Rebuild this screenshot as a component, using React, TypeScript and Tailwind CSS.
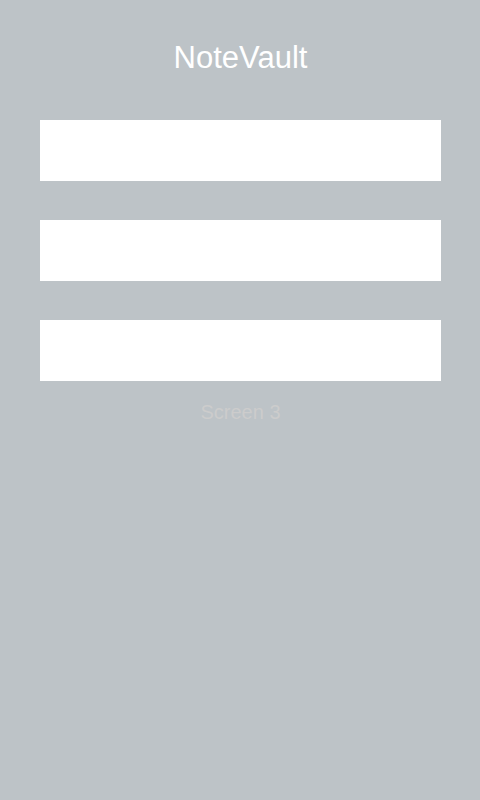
const FIELDS = ['First note', 'Second note', 'Third note'];

export default function App() {
  return (
    <main className="min-h-screen bg-[#bdc3c7] py-10 pr-[39px] pl-10 text-center font-['Liberation_Sans',Arial,sans-serif]">
      <h1 className="text-[31px] leading-9 text-white">NoteVault</h1>

      {/* Empty note fields */}
      <form className="mt-11 flex flex-col gap-[39px]">
        {FIELDS.map((label) => (
          <input
            key={label}
            type="text"
            aria-label={label}
            className="h-[61px] w-full bg-white px-4 text-xl text-gray-700 outline-none"
          />
        ))}
      </form>

      <p className="mt-[19px] text-xl leading-6 text-[#cccccc]">Screen 3</p>
    </main>
  );
}
